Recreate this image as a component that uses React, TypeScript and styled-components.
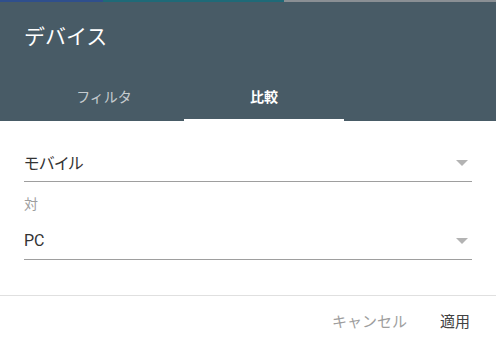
import React from 'react';
import styled, { createGlobalStyle } from 'styled-components';

const GlobalStyle = createGlobalStyle`
  html, body { margin: 0; padding: 0; background: #fff; }
  body { font-family: Roboto, "Noto Sans CJK JP", sans-serif; }
`;

const Dialog = styled.div`
  width: 496px;
  height: 341px;
  display: flex;
  flex-direction: column;
  background: #fff;
  overflow: hidden;
`;

const Progress = styled.div`
  display: flex;
  height: 2px;
  background: #8a8f94;
`;

const Segment = styled.div<{ $w: number; $c: string }>`
  width: ${(p) => p.$w}px;
  background: ${(p) => p.$c};
`;

const Header = styled.div`
  background: #485b66;
  padding: 0 24px;
  display: flex;
  flex-direction: column;
`;

const Title = styled.h1`
  margin: 0;
  padding-top: 21px;
  height: 44px;
  box-sizing: border-box;
  font-size: 21px;
  font-weight: 400;
  color: #fff;
  line-height: 28px;
`;

const Tabs = styled.div`
  display: flex;
`;

const Tab = styled.div<{ $active?: boolean }>`
  width: 160px;
  height: 75px;
  box-sizing: border-box;
  display: flex;
  align-items: flex-end;
  justify-content: center;
  padding-bottom: 12px;
  font-size: 14px;
  line-height: 20px;
  font-weight: ${(p) => (p.$active ? 700 : 400)};
  color: ${(p) => (p.$active ? '#fff' : 'rgba(255,255,255,0.7)')};
  border-bottom: 2px solid ${(p) => (p.$active ? '#fff' : 'transparent')};
`;

const Body = styled.div`
  padding: 0 24px;
  display: flex;
  flex-direction: column;
  height: 174px;
`;

const Select = styled.div<{ $top: number }>`
  margin-top: ${(p) => p.$top}px;
  height: 36px;
  box-sizing: border-box;
  display: flex;
  align-items: center;
  justify-content: space-between;
  border-bottom: 1px solid #9e9e9e;
  font-size: 16px;
  color: #333;
  padding-bottom: 3px;
`;

const Value = styled.span`
  font-feature-settings: "palt";
`;

const Arrow = styled.span`
  width: 0;
  height: 0;
  border-left: 6px solid transparent;
  border-right: 6px solid transparent;
  border-top: 6px solid #b3b3b3;
  margin-right: 4px;
  margin-top: 1px;
`;

const Label = styled.div`
  margin-top: 12px;
  font-size: 14px;
  color: #9e9e9e;
  height: 20px;
  line-height: 20px;
`;

const Footer = styled.div`
  border-top: 1px solid #e0e0e0;
  display: flex;
  justify-content: flex-end;
  align-items: flex-start;
  gap: 33px;
  padding: 16px 26px 0 0;
  flex: 1;
`;

const Button = styled.span<{ $muted?: boolean }>`
  font-size: 15px;
  line-height: 20px;
  color: ${(p) => (p.$muted ? '#9e9e9e' : '#424242')};
`;

export default function App() {
  return (
    <>
      <GlobalStyle />
      <Dialog>
        <Progress>
          <Segment $w={103} $c="#2f4f8d" />
          <Segment $w={181} $c="#1f6a78" />
        </Progress>
        <Header>
          <Title>デバイス</Title>
          <Tabs>
            <Tab>フィルタ</Tab>
            <Tab $active>比較</Tab>
          </Tabs>
        </Header>
        <Body>
          <Select $top={25}>
            <Value>モバイル</Value>
            <Arrow />
          </Select>
          <Label>対</Label>
          <Select $top={10}>
            <Value>PC</Value>
            <Arrow />
          </Select>
        </Body>
        <Footer>
          <Button $muted>キャンセル</Button>
          <Button>適用</Button>
        </Footer>
      </Dialog>
    </>
  );
}
